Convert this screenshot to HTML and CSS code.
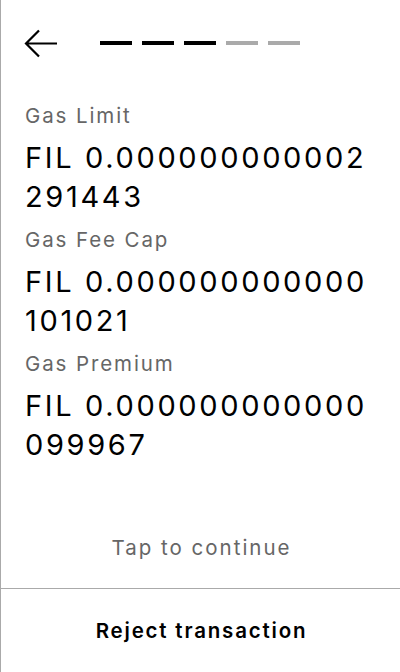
FILE: index.html
```html
<!DOCTYPE html>
<html>
<head>
<meta charset="utf-8">
<link rel="stylesheet" href="styles.css">
</head>
<body>
<div class="screen">
  <div class="header">
    <svg class="back" width="34" height="30" viewBox="0 0 34 30">
      <path d="M33 14.5H2M15 1.5L2 14.5L15 27.5" fill="none" stroke="#000" stroke-width="2.2"/>
    </svg>
    <div class="steps">
      <span class="step done"></span>
      <span class="step done"></span>
      <span class="step done"></span>
      <span class="step"></span>
      <span class="step"></span>
    </div>
  </div>
  <div class="content">
    <div class="field">
      <div class="label">Gas Limit</div>
      <div class="value">FIL 0.000000000002<br>291443</div>
    </div>
    <div class="field">
      <div class="label">Gas Fee Cap</div>
      <div class="value">FIL 0.000000000000<br>101021</div>
    </div>
    <div class="field">
      <div class="label">Gas Premium</div>
      <div class="value">FIL 0.000000000000<br>099967</div>
    </div>
  </div>
  <div class="tap">Tap to continue</div>
  <div class="footer">
    <div class="reject">Reject transaction</div>
  </div>
</div>
</body>
</html>
```
FILE: styles.css
```css
html, body {
  margin: 0;
  padding: 0;
  background: #fff;
}
body {
  font-family: Inter, "Noto Sans", sans-serif;
  color: #000;
}
.screen {
  width: 399px;
  height: 672px;
  border-left: 1px solid #aaa;
  display: flex;
  flex-direction: column;
}
.header {
  display: flex;
  align-items: center;
  padding: 29px 0 0 23px;
  height: 30px;
}
.back {
  display: block;
}
.steps {
  display: flex;
  gap: 10px;
  margin-left: 42px;
  margin-top: -2px;
}
.step {
  width: 32px;
  height: 4px;
  background: #aaa;
}
.step.done {
  background: #000;
}
.content {
  padding: 43px 24px 0;
  display: flex;
  flex-direction: column;
  gap: 10px;
}
.label {
  font-size: 20.5px;
  line-height: 28px;
  letter-spacing: 1.9px;
  color: #666;
  margin-bottom: 8px;
}
.value {
  font-size: 29px;
  line-height: 39px;
  letter-spacing: 2.65px;
}
.tap {
  margin-top: auto;
  text-align: center;
  font-size: 20.5px;
  line-height: 28px;
  letter-spacing: 2px;
  text-indent: 2px;
  color: #666;
  padding-bottom: 26px;
}
.footer {
  border-top: 1px solid #aaa;
  height: 83px;
  display: flex;
  align-items: center;
  justify-content: center;
}
.reject {
  font-size: 20.5px;
  font-weight: 600;
  line-height: 28px;
  letter-spacing: 1.8px;
  padding-left: 2px;
}
```
